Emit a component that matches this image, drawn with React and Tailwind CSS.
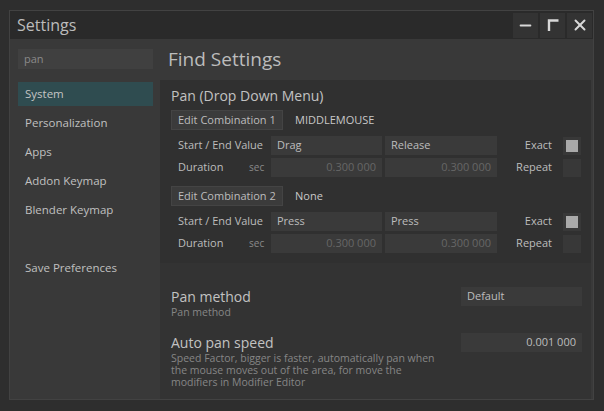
import { Minus, X } from "lucide-react";

const font = { fontFamily: '"Open Sans", "Noto Sans", "DejaVu Sans", sans-serif' };

function Field({ children, right, dim, className = "" }) {
  return (
    <div
      className={`h-[19px] bg-[#3a3a3a] flex items-center px-[6px] text-[11px] whitespace-nowrap ${
        right ? "justify-end" : ""
      } ${dim ? "text-[#666]" : "text-[#bdbdbd]"} ${className}`}
    >
      {children}
    </div>
  );
}

function Combination({ label, keyName, start, end }) {
  return (
    <div>
      <div className="flex items-center h-[20px]">
        <div className="w-[112px] h-[20px] bg-[#3b3b3b] border border-[#444] flex items-center px-[6px] text-[11px] text-[#bdbdbd] whitespace-nowrap">
          {label}
        </div>
        <div className="pl-[12px] text-[11px] text-[#c8c8c8]">{keyName}</div>
      </div>
      <div className="mt-[6px] flex flex-col gap-[3px] pl-[7px]">
        <div className="flex items-center">
          <div className="w-[93px] text-[11px] text-[#bdbdbd] whitespace-nowrap">Start / End Value</div>
          <Field className="w-[111px]">{start}</Field>
          <Field className="w-[112px] ml-[3px]">{end}</Field>
          <div className="w-[55px] text-right text-[11px] text-[#bdbdbd]">Exact</div>
          <div className="ml-[11px] w-[18px] h-[18px] bg-[#383838] flex items-center justify-center">
            <div className="w-[12px] h-[12px] bg-[#a9a9a9]" />
          </div>
        </div>
        <div className="flex items-center">
          <div className="w-[71px] text-[11px] text-[#bdbdbd]">Duration</div>
          <div className="w-[22px] text-[10px] text-[#8a8a8a]">sec</div>
          <Field className="w-[111px]" right dim>0.300 000</Field>
          <Field className="w-[112px] ml-[3px]" right dim>0.300 000</Field>
          <div className="w-[55px] text-right text-[11px] text-[#bdbdbd]">Repeat</div>
          <div className="ml-[11px] w-[18px] h-[18px] bg-[#383838]" />
        </div>
      </div>
    </div>
  );
}

export default function App() {
  const nav = ["System", "Personalization", "Apps", "Addon Keymap", "Blender Keymap"];
  return (
    <div className="w-[604px] h-[411px] bg-[#2e2e2e] pt-[10px] pl-[9px]" style={font}>
      <div className="w-[585px] h-[390px] bg-[#393939] border border-[#424242] flex flex-col">
        {/* Title bar */}
        <div className="h-[28px] bg-[#2a2a2a] flex items-center justify-between pl-[7px] pr-[1px]">
          <span className="text-[16px] text-[#bcbcbc]">Settings</span>
          <div className="flex gap-[2px]">
            <div className="w-[25px] h-[25px] bg-[#333] flex items-center justify-center">
              <Minus className="w-[17px] h-[17px] text-[#d8d8d8]" strokeWidth={2.5} />
            </div>
            <div className="w-[25px] h-[25px] bg-[#333] flex items-center justify-center">
              <svg width="14" height="14" viewBox="0 0 14 14">
                <path d="M3 13V2.5H12.5" fill="none" stroke="#d8d8d8" strokeWidth="2.4" />
              </svg>
            </div>
            <div className="w-[25px] h-[25px] bg-[#333] flex items-center justify-center">
              <X className="w-[18px] h-[18px] text-[#d8d8d8]" strokeWidth={2.6} />
            </div>
          </div>
        </div>

        <div className="flex flex-1 min-h-0">
          {/* Sidebar */}
          <div className="w-[150px] pl-[8px] pr-[7px] pt-[10px] flex flex-col">
            <div className="h-[20px] bg-[#404040] flex items-center px-[6px] text-[11px] text-[#8a8a8a]">
              pan
            </div>
            <div className="mt-[13px] flex flex-col gap-[5px]">
              {nav.map((n, i) => (
                <div
                  key={n}
                  className={`h-[24px] flex items-center px-[7px] text-[11.5px] ${
                    i === 0 ? "bg-[#2f4c50] text-[#c4c4c4]" : "text-[#c0c0c0]"
                  }`}
                >
                  {n}
                </div>
              ))}
            </div>
            <div className="mt-[34px] h-[24px] flex items-center px-[7px] text-[11.5px] text-[#c0c0c0]">
              Save Preferences
            </div>
          </div>

          {/* Content */}
          <div className="flex-1 flex flex-col pr-[2px]">
            <div className="h-[41px] flex items-center pl-[8px] text-[19px] text-[#bcbcbc]">
              Find Settings
            </div>
            <div className="flex-1 bg-[#333] flex flex-col">
              <div className="bg-[#303030] pl-[11px] pt-[7px] pb-[10px]">
                <div className="text-[14px] text-[#c2c2c2] leading-[17px]">Pan (Drop Down Menu)</div>
                <div className="mt-[6px] flex flex-col gap-[9px]">
                  <Combination label="Edit Combination 1" keyName="MIDDLEMOUSE" start="Drag" end="Release" />
                  <Combination label="Edit Combination 2" keyName="None" start="Press" end="Press" />
                </div>
              </div>

              <div className="pl-[11px] pr-[9px] pt-[25px] flex flex-col gap-[16px]">
                <div className="flex justify-between items-start">
                  <div>
                    <div className="text-[14px] leading-[17px] text-[#c2c2c2]">Pan method</div>
                    <div className="mt-[1px] text-[10.5px] leading-[12px] text-[#868686]">Pan method</div>
                  </div>
                  <Field className="w-[121px] mt-[-1px]">Default</Field>
                </div>
                <div className="flex justify-between items-start">
                  <div className="w-[272px]">
                    <div className="text-[14px] leading-[17px] text-[#c2c2c2]">Auto pan speed</div>
                    <div className="mt-[1px] text-[10.5px] leading-[12px] text-[#868686]">
                      Speed Factor, bigger is faster, automatically pan when the mouse moves out of the area, for move the modifiers in Modifier Editor
                    </div>
                  </div>
                  <Field className="w-[121px] mt-[-1px]" right>0.001 000</Field>
                </div>
              </div>
            </div>
          </div>
        </div>
      </div>
    </div>
  );
}
